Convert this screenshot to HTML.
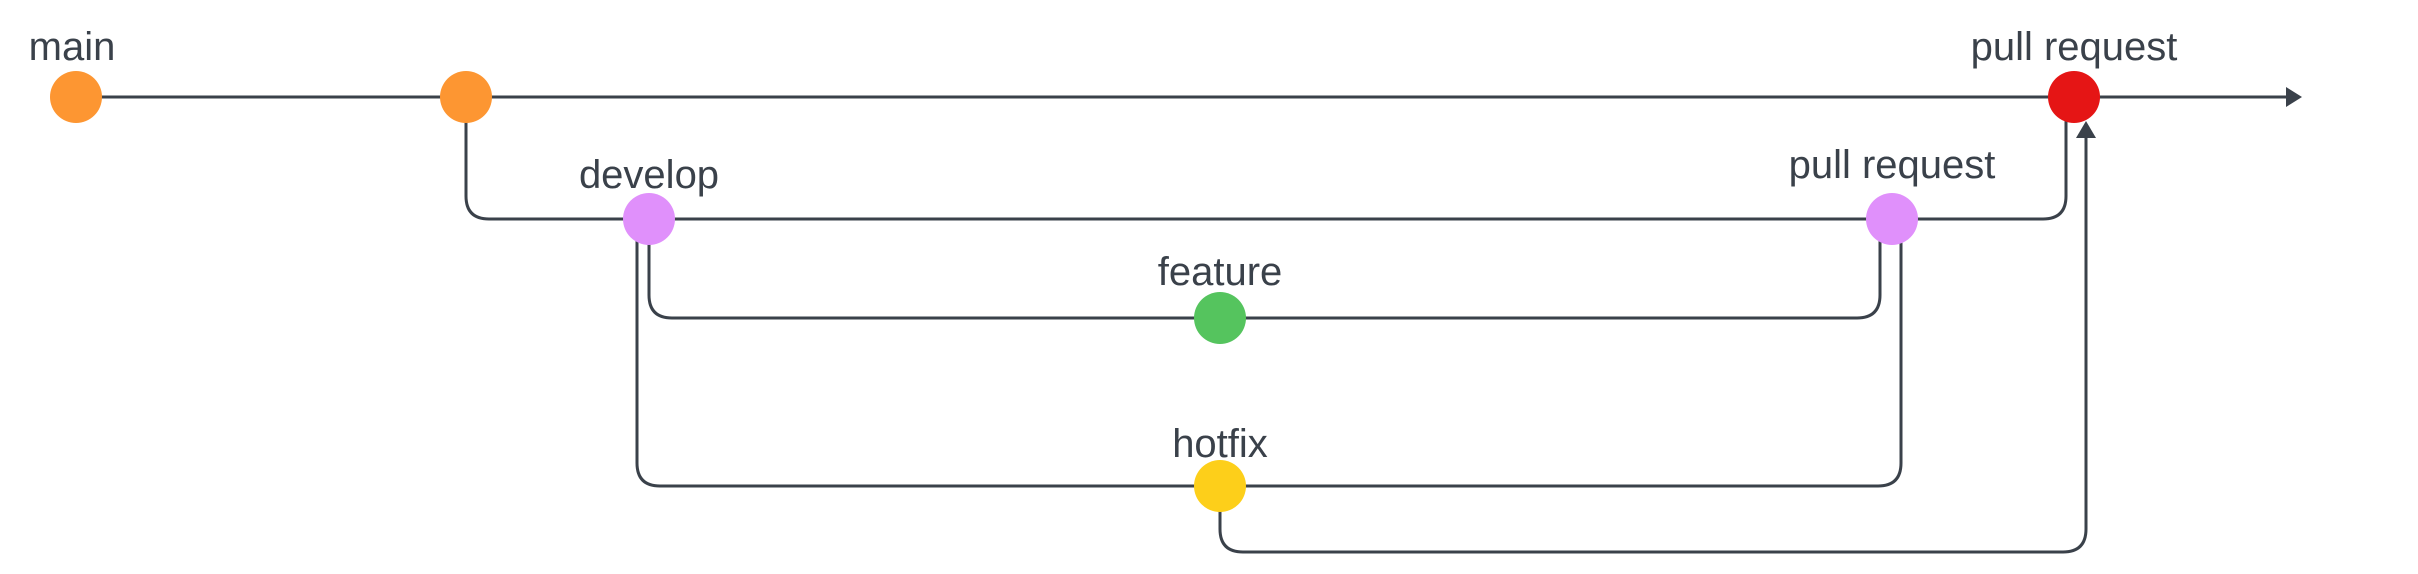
<!DOCTYPE html>
<html><head><style>html,body{margin:0;padding:0;background:#fff;}svg{display:block}</style></head>
<body>
<svg width="2418" height="574" viewBox="0 0 2418 574" xmlns="http://www.w3.org/2000/svg">
<g fill="none" stroke="#3a414a" stroke-width="3">
<line x1="76" y1="97" x2="2290" y2="97"/>
<path d="M466 97 V196 Q466 219 489 219 H2043 Q2066 219 2066 196 V97"/>
<path d="M649 219 V295 Q649 318 672 318 H1857 Q1880 318 1880 295 V219"/>
<path d="M637 219 V463 Q637 486 660 486 H1878 Q1901 486 1901 463 V219"/>
<path d="M1220 486 V529 Q1220 552 1243 552 H2063 Q2086 552 2086 529 V130"/>
</g>
<polygon points="2286,87 2302,97 2286,107" fill="#3a414a"/>
<polygon points="2076,138 2086,121 2096,138" fill="#3a414a"/>
<ellipse cx="76" cy="97" rx="26" ry="26" fill="#fd9632"/>
<ellipse cx="466" cy="97" rx="26" ry="26" fill="#fd9632"/>
<ellipse cx="2074" cy="97" rx="26" ry="26" fill="#e51515"/>
<ellipse cx="649" cy="219" rx="26" ry="26" fill="#e090fb"/>
<ellipse cx="1892" cy="219" rx="26" ry="26" fill="#e090fb"/>
<ellipse cx="1220" cy="318" rx="26" ry="26" fill="#55c45e"/>
<ellipse cx="1220" cy="486" rx="26" ry="26" fill="#fdcf1a"/>
<g font-family="Liberation Sans, sans-serif" font-size="40" fill="#3a414a" text-anchor="middle">
<text x="72" y="60">main</text>
<text x="2074" y="60">pull request</text>
<text x="649" y="188">develop</text>
<text x="1892" y="178">pull request</text>
<text x="1220" y="285">feature</text>
<text x="1220" y="457">hotfix</text>
</g>
</svg>
</body></html>
